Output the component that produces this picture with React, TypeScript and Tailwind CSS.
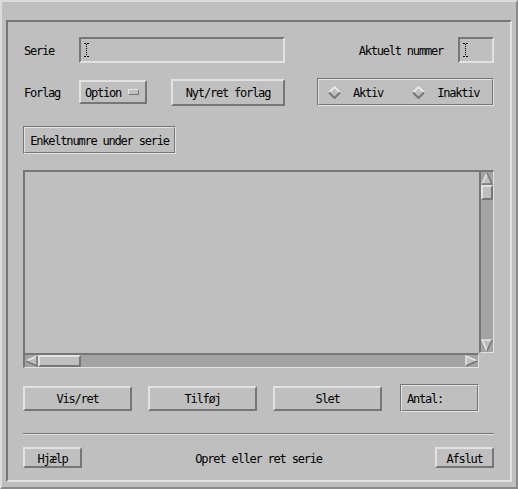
import React from 'react'

const raised = 'border-2 border-t-[#e2e2e2] border-l-[#e2e2e2] border-b-[#767676] border-r-[#767676]'
const sunken = 'border-2 border-t-[#767676] border-l-[#767676] border-b-[#e2e2e2] border-r-[#e2e2e2]'
const etchedOuter = 'border border-t-[#767676] border-l-[#767676] border-b-[#e2e2e2] border-r-[#e2e2e2]'
const etchedInner = 'border border-t-[#e2e2e2] border-l-[#e2e2e2] border-b-[#767676] border-r-[#767676]'
// nudge text one pixel down when centred
const txt = 'pt-[2px]'

function IBeam() {
  return (
    <svg width="5" height="14" viewBox="0 0 5 14" className="block">
      <path d="M0 0.5h2M3 0.5h2M0 13.5h2M3 13.5h2" stroke="#000" strokeWidth="1" />
      <path d="M2.5 1v12" stroke="#000" strokeWidth="1" strokeDasharray="1 1" />
    </svg>
  )
}

function Field({ className }: { className: string }) {
  return (
    <div className={`${sunken} ${className} h-[26px] flex items-center pl-[3px]`}>
      <IBeam />
    </div>
  )
}

function Button({ label, className }: { label: string; className: string }) {
  return (
    <div className={`${raised} ${className} flex items-center justify-center`}>
      <span className={txt}>{label}</span>
    </div>
  )
}

function Etched({ className, children }: { className: string; children: React.ReactNode }) {
  return (
    <div className={`${etchedOuter} ${className}`}>
      <div className={`${etchedInner} w-full h-full flex items-center`}>{children}</div>
    </div>
  )
}

function Diamond() {
  return (
    <svg width="13" height="13" viewBox="0 0 13 13" className="block">
      <polygon points="6.5,1 12,6.5 6.5,12 1,6.5" fill="#bfbfbf" />
      <path d="M1 6.5L6.5 1L12 6.5" fill="none" stroke="#e8e8e8" strokeWidth="2" />
      <path d="M1 6.5L6.5 12L12 6.5" fill="none" stroke="#767676" strokeWidth="2" />
    </svg>
  )
}

function Arrow({ dir }: { dir: 'up' | 'down' | 'left' | 'right' }) {
  const light = '#e8e8e8'
  const dark = '#767676'
  if (dir === 'up')
    return (
      <svg width="12" height="13" viewBox="0 0 12 13" className="block">
        <polygon points="6,1 11,12 1,12" fill="#bfbfbf" />
        <path d="M1 12L6 1" stroke={light} strokeWidth="1.5" fill="none" />
        <path d="M6 1L11 12H1" stroke={dark} strokeWidth="1.5" fill="none" />
      </svg>
    )
  if (dir === 'down')
    return (
      <svg width="12" height="13" viewBox="0 0 12 13" className="block">
        <polygon points="1,1 11,1 6,12" fill="#bfbfbf" />
        <path d="M6 12L1 1H11" stroke={light} strokeWidth="1.5" fill="none" />
        <path d="M11 1L6 12" stroke={dark} strokeWidth="1.5" fill="none" />
      </svg>
    )
  if (dir === 'left')
    return (
      <svg width="13" height="12" viewBox="0 0 13 12" className="block">
        <polygon points="1,6 12,1 12,11" fill="#bfbfbf" />
        <path d="M1 6L12 1" stroke={light} strokeWidth="1.5" fill="none" />
        <path d="M12 1V11L1 6" stroke={dark} strokeWidth="1.5" fill="none" />
      </svg>
    )
  return (
    <svg width="13" height="12" viewBox="0 0 13 12" className="block">
      <polygon points="1,1 12,6 1,11" fill="#bfbfbf" />
      <path d="M1 11V1L12 6" stroke={light} strokeWidth="1.5" fill="none" />
      <path d="M12 6L1 11" stroke={dark} strokeWidth="1.5" fill="none" />
    </svg>
  )
}

export default function App() {
  return (
    <div className="w-[518px] h-[489px] bg-[#bfbfbf] border-2 border-t-[#dcdcdc] border-l-[#dcdcdc] border-b-[#8a8a8a] border-r-[#8a8a8a] pt-[18px] pl-[4px] pr-[4px] pb-[5px] flex flex-col text-black text-[12px] leading-none tracking-[-1.2px] font-['DejaVu_Sans_Mono',monospace]">
      <div className={`${sunken} flex-1 flex flex-col pl-[15px] pr-[16px] pt-[15px]`}>
        {/* serie / aktuelt nummer */}
        <div className="flex items-center h-[26px]">
          <span className={`w-[56px] pl-[1px] ${txt}`}>Serie</span>
          <Field className="w-[206px]" />
          <div className="flex-1" />
          <span className={`mr-[15px] ${txt}`}>Aktuelt nummer</span>
          <Field className="w-[36px]" />
        </div>

        {/* forlag */}
        <div className="flex items-center h-[28px] mt-[15px]">
          <span className={`w-[56px] pl-[1px] ${txt}`}>Forlag</span>
          <div className={`${raised} w-[68px] h-[24px] flex items-center pl-[4px]`}>
            <span className={txt}>Option</span>
            <div className="ml-auto mr-[6px] w-[11px] h-[6px] border border-t-[#e8e8e8] border-l-[#e8e8e8] border-b-[#767676] border-r-[#767676] bg-[#bfbfbf]" />
          </div>
          <Button label="Nyt/ret forlag" className="ml-[24px] w-[114px] h-[27px]" />
          <div className="flex-1" />
          <Etched className="w-[177px] h-[28px]">
            <div className="ml-[9px]">
              <Diamond />
            </div>
            <span className={`ml-[12px] ${txt}`}>Aktiv</span>
            <div className="ml-[29px]">
              <Diamond />
            </div>
            <span className={`ml-[12px] ${txt}`}>Inaktiv</span>
          </Etched>
        </div>

        {/* enkeltnumre */}
        <div className="mt-[20px] flex">
          <Etched className="w-[153px] h-[28px]">
            <span className={`w-full text-center ${txt}`}>Enkeltnumre under serie</span>
          </Etched>
        </div>

        {/* liste med rullebjælker */}
        <div className="mt-[16px] h-[198px] grid grid-cols-[1fr_15px] grid-rows-[1fr_15px]">
          <div className="border-t-2 border-l-2 border-[#767676] bg-[#bfbfbf]" />
          <div className="border-t-2 border-l-2 border-t-[#767676] border-l-[#767676] border-r border-b border-r-[#e2e2e2] border-b-[#e2e2e2] bg-[#a3a3a3] flex flex-col">
            <Arrow dir="up" />
            <div className="w-[12px] h-[15px] border-2 border-t-[#e2e2e2] border-l-[#e2e2e2] border-b-[#767676] border-r-[#767676] bg-[#bfbfbf]" />
            <div className="flex-1" />
            <Arrow dir="down" />
          </div>
          <div className="border-t-2 border-l-2 border-t-[#767676] border-l-[#767676] border-r border-b border-r-[#e2e2e2] border-b-[#e2e2e2] bg-[#a3a3a3] flex items-center">
            <Arrow dir="left" />
            <div className="w-[43px] h-[12px] border-2 border-t-[#e2e2e2] border-l-[#e2e2e2] border-b-[#767676] border-r-[#767676] bg-[#bfbfbf]" />
            <div className="flex-1" />
            <Arrow dir="right" />
          </div>
          <div className="bg-[#bfbfbf]" />
        </div>

        {/* knapper */}
        <div className="mt-[16px] h-[28px] flex items-center">
          <Button label="Vis/ret" className="w-[109px] h-[25px]" />
          <Button label="Tilføj" className="ml-[16px] w-[109px] h-[25px]" />
          <Button label="Slet" className="ml-[16px] w-[109px] h-[25px]" />
          <Etched className="ml-[18px] w-[79px] h-[28px]">
            <span className={`pl-[5px] ${txt}`}>Antal:</span>
          </Etched>
        </div>

        <div className="mt-[21px] h-[2px] border-t border-b border-t-[#767676] border-b-[#e2e2e2]" />

        {/* bund */}
        <div className="mt-[12px] h-[21px] flex items-center">
          <Button label="Hjælp" className="w-[59px] h-[21px]" />
          <span className={`flex-1 text-center ${txt}`}>Opret eller ret serie</span>
          <Button label="Afslut" className="w-[59px] h-[21px]" />
        </div>
      </div>
    </div>
  )
}
